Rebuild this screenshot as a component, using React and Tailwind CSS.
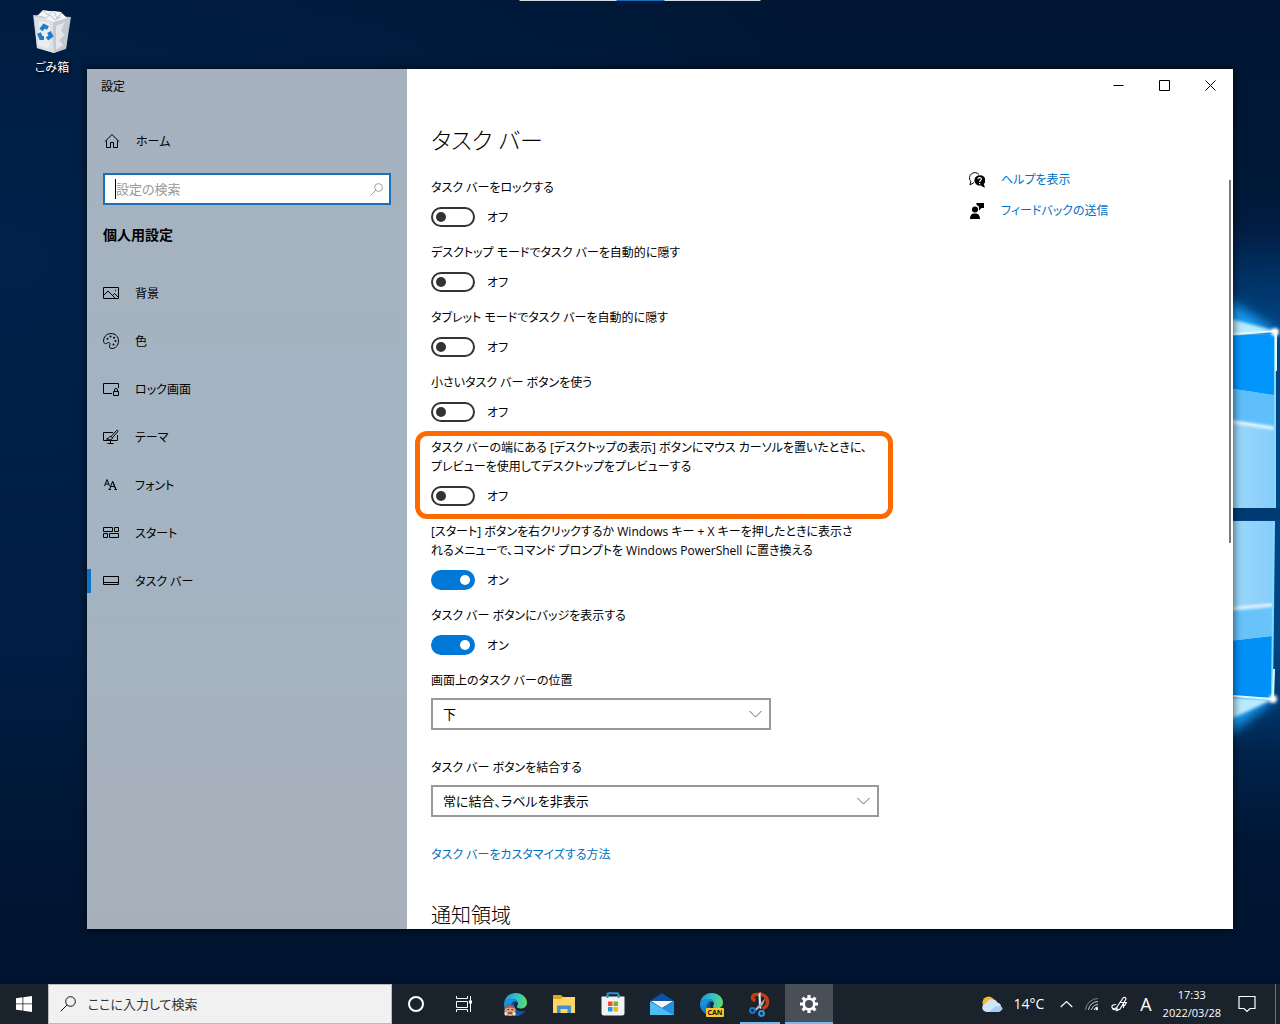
import React, { useState } from "react";

const NAV_ITEMS = [
  { id: "background", label: "背景" },
  { id: "colors", label: "色" },
  { id: "lock", label: "ロック画面" },
  { id: "themes", label: "テーマ" },
  { id: "fonts", label: "フォント" },
  { id: "start", label: "スタート" },
  { id: "taskbar", label: "タスク バー" },
];

const SETTINGS = [
  { id: "lockBar", lines: ["タスク バーをロックする"], on: false },
  {
    id: "hideDesktop",
    lines: ["デスクトップ モードでタスク バーを自動的に隠す"],
    on: false,
  },
  {
    id: "hideTablet",
    lines: ["タブレット モードでタスク バーを自動的に隠す"],
    on: false,
  },
  { id: "small", lines: ["小さいタスク バー ボタンを使う"], on: false },
  {
    id: "peek",
    lines: [
      "タスク バーの端にある [デスクトップの表示] ボタンにマウス カーソルを置いたときに、",
      "プレビューを使用してデスクトップをプレビューする",
    ],
    on: false,
    highlight: true,
  },
  {
    id: "powershell",
    lines: [
      "[スタート] ボタンを右クリックするか Windows キー + X キーを押したときに表示さ",
      "れるメニューで、コマンド プロンプトを Windows PowerShell に置き換える",
    ],
    on: true,
  },
  {
    id: "badge",
    lines: ["タスク バー ボタンにバッジを表示する"],
    on: true,
  },
];

// --- Icons ---
const NavIcon = ({ id }) => (
  <svg
    width="16"
    height="16"
    viewBox="0 0 16 16"
    fill="none"
    stroke="#000"
    strokeWidth="1"
    className="shrink-0"
    aria-hidden="true"
  >
    {id === "background" && (
      <>
        <path d="M.5 2.500h15v11H.5z" />
        <path d="M.5 10.500 5 6l7.500 7.500M9.500 10.500l2-2 4 4" />
        <path d="M12 5.500h1" />
      </>
    )}
    {id === "colors" && (
      <>
        <path d="M.6 8.500C.2 4 3.500.5 8 .5s7.500 3.300 7.500 7.500-3 7.500-6.500 7.500c-2.200 0-2.800-1.200-2.300-2.800.5-1.700.4-3-1-3.200-1.500-.2-1.700 1.300-3 1.200C1.500 10.600.7 9.700.6 8.500z" />
        <g fill="#000" stroke="none">
          <circle cx="4.500" cy="5.800" r="1" />
          <circle cx="7.500" cy="3.500" r="1" />
          <circle cx="11" cy="4.800" r="1" />
          <circle cx="12.500" cy="8" r="1" />
          <circle cx="10.500" cy="11.500" r="1" />
        </g>
      </>
    )}
    {id === "lock" && (
      <>
        <path d="M9 12.500H.5v-10h15V7" />
        <path d="M10.500 10.500h5v4h-5zM11.500 10.500V9a1.500 1.500 0 0 1 3 0v1.500" />
      </>
    )}
    {id === "themes" && (
      <>
        <path d="M10 3.500H.5v8h14V6M7.500 11.500v3M4.500 14.500h6" />
        <path d="M8 7.500 13.500 1.500c1-.8 2 .2 1.200 1.200L9.500 8.800zM8 7.500c-2 0-2 2-4.500 2.500 2 1.200 6 1 6-1.200" />
      </>
    )}
    {id === "fonts" && (
      <>
        <path d="M1.500 9 4 2.500 6.500 9M2.300 7h3.500" />
        <path d="M6.500 12.500 9.500 4.500l3.500 8M7.500 9.500h4.300M5.500 12.500h2.500M11.500 12.500h2.500" />
        <path d="M9.800 4.500 12.800 12.500" />
      </>
    )}
    {id === "start" && (
      <path d="M.5 2.500h9v4h-9zM11.500 2.500h4v4h-4zM.5 8.500h4v4h-4zM6.500 8.500h9v4h-9z" />
    )}
    {id === "taskbar" && <path d="M.5 3.500h15v8H.5zM.5 9.500h15" />}
  </svg>
);

const HomeIcon = () => (
  <svg width="16" height="16" viewBox="0 0 16 16" fill="none" stroke="#000" aria-hidden="true">
    <path d="M1 8.500 8 1.500l7 7M2.500 7.500v7h4v-5h3v5h4v-7" />
  </svg>
);

const Magnifier = ({ size, color }) => (
  <svg width={size} height={size} viewBox="0 0 16 16" fill="none" stroke={color} aria-hidden="true">
    <circle cx="10.500" cy="5.500" r="4.800" />
    <path d="M7 9 .7 15.300" />
  </svg>
);

const EdgeLogo = () => (
  <>
    <defs>
      <linearGradient id="edgeTop" x1="0" y1="0.400" x2="1" y2="0.500">
        <stop offset="0" stopColor="#2295d8" />
        <stop offset=".5" stopColor="#2fc1cf" />
        <stop offset="1" stopColor="#5fdc68" />
      </linearGradient>
      <linearGradient id="edgeLeft" x1="0" y1="0" x2="0.300" y2="1">
        <stop offset="0" stopColor="#1c9ce2" />
        <stop offset="1" stopColor="#1271c9" />
      </linearGradient>
    </defs>
    <path
      d="M1 12C1.500 5 6.500 1 12.500 1 19.500 1 24 6 24 10.500c0 4-3 6-6.200 6-2.600 0-4-1-4-2 0-.8 1.200-1.200 1.200-3C15 9 12.500 7 9 7c-4 0-7 2.500-8 5z"
      fill="url(#edgeTop)"
    />
    <path d="M1 12c.8-3 4-5 8-5 3.600 0 6 2.200 6 4.500-1-1.500-2.200-2-4-2-3 2-3.500 6 0 9 2 2 5 3 9 2.500C17 24.500 10 25 5.500 21 2 18 .8 15 1 12z" fill="url(#edgeLeft)" />
    <path d="M11 9.500C7.500 11 6.500 15.500 9 19c2.700 3.500 7.500 4.500 11.500 2 1.200-.8 2.200-2 2.200-2.600-3.200 1.600-7.200 1.200-9.700-1.400-2-2.200-1.900-4.500-.8-6.500z" fill="#14509c" />
  </>
);

const RecycleBin = () => (
  <svg width="40" height="46" viewBox="0 0 40 46" aria-hidden="true">
    <path d="M1 7 39 9 34 41 22 45 5 40z" fill="#aeb9c3" />
    <path d="M2 8 21 13 22 45 5 40z" fill="#dce1e6" />
    <path d="M21 13 38 9 34 40 22 45z" fill="#c3c9cf" />
    <path d="M5 8 11 2l6 1 5 0 7 1 6 6-13 4z" fill="#f4f5f6" />
    <path d="m11 2 5 5 5-4M22 4l3 6 5-5M7 8l7 2 4-3 5 5 6-3" stroke="#b8bfc5" fill="none" />
    <path d="m24 18 9-4-4 9 4 4-6 5 4 5-7 5z" fill="#eceef0" opacity=".8" />
    <path d="m7 12 10 3 3 15-4 11-10-4z" fill="#eff1f3" opacity=".7" />
    <g fill="none" stroke="#1e7cc8" strokeWidth="4">
      <path d="m9 22 3-4 4 2" />
      <path d="M7 25l2 5 3 0" />
      <path d="m17 24 2 4-4 3" />
    </g>
  </svg>
);

// Lit window panes at the right edge of the wallpaper
const WindowGlow = () => (
  <svg
    className="absolute right-0 top-[230px]"
    width="100"
    height="520"
    viewBox="1180 230 100 520"
    aria-hidden="true"
  >
    <defs>
      <linearGradient id="sky" x1="0" y1="0" x2="0" y2="1">
        <stop offset="0" stopColor="#00407e" stopOpacity="0" />
        <stop offset=".2" stopColor="#004583" />
        <stop offset=".8" stopColor="#004583" />
        <stop offset="1" stopColor="#00407e" stopOpacity="0" />
      </linearGradient>
      <linearGradient id="pane" x1="0" y1="0" x2="1" y2="0">
        <stop offset="0" stopColor="#a4ddfc" />
        <stop offset="1" stopColor="#86cdfa" />
      </linearGradient>
      <filter id="soft" x="-50%" y="-50%" width="200%" height="200%">
        <feGaussianBlur stdDeviation="6" />
      </filter>
      <filter id="soft1" x="-50%" y="-50%" width="200%" height="200%">
        <feGaussianBlur stdDeviation="1.500" />
      </filter>
    </defs>
    <path d="M1180 230h100v520h-100z" fill="url(#sky)" />
    <path d="M1220 295 1278 331 1220 345zM1220 690l56 9-56 42z" fill="#139cf5" filter="url(#soft)" />
    <path d="M1220 316 1276 331 1220 338zM1220 697l54 2-54 25z" fill="#b9ebff" filter="url(#soft1)" />
    <path d="M1220 336 1274 334v174h-54z" fill="url(#pane)" />
    <path d="M1220 336 1274 334v61l-54-8z" fill="#0095fc" />
    <path d="M1220 387 1274 395v32l-54-8z" fill="#5fbffb" />
    <path d="m1220 420 54 8" stroke="#f4fbff" strokeWidth="3" filter="url(#soft1)" />
    <path d="M1220 521h54l-2 177-52-3z" fill="url(#pane)" />
    <path d="m1220 610 53-5v31l-53 6z" fill="#a4ddfc" />
    <path d="m1220 642 53-6-1 62-52-3z" fill="#0090f8" />
    <path d="m1220 610 53-5v31l-53 6z" fill="#68c3fb" />
    <path d="m1220 610 53-5" stroke="#f4fbff" strokeWidth="3" filter="url(#soft1)" />
    <path d="M1220 508h60v12h-60z" fill="#003a72" />
    <path d="M1275 331v177M1274 521l-2 178" stroke="#7fdcff" strokeWidth="2" />
    <path d="m1220 335 56-4v40M1220 695l53 4 1-30" stroke="#e4faff" strokeWidth="2" fill="none" />
    <circle cx="1275" cy="332" r="4" fill="#fff" filter="url(#soft1)" />
    <circle cx="1273" cy="699" r="4" fill="#fff" filter="url(#soft1)" />
  </svg>
);

const ToggleSetting = ({ setting, checked, onChange }) => (
  <div className="relative flex flex-col gap-[10px]">
    <label htmlFor={setting.id} className="whitespace-nowrap">
      {setting.lines.map((line) => (
        <span key={line} className="block">
          {line}
        </span>
      ))}
    </label>
    <div className="flex h-5 items-center gap-3">
      <input
        id={setting.id}
        type="checkbox"
        role="switch"
        checked={checked}
        onChange={onChange}
        className="flex h-5 w-11 appearance-none items-center rounded-full border-2 border-[#333] px-[3px] before:size-[10px] before:rounded-full before:bg-[#333] checked:justify-end checked:border-[#0078d7] checked:bg-[#0078d7] checked:before:bg-white"
      />
      <span>{checked ? "オン" : "オフ"}</span>
    </div>
    {setting.highlight && (
      <div className="pointer-events-none absolute -left-4 -top-[7px] h-[88px] w-[478px] rounded-xl border-[5px] border-[#ff6a00]" />
    )}
  </div>
);

const SelectSetting = ({ id, label, options, className }) => (
  <div className="flex flex-col gap-2">
    <label htmlFor={id}>{label}</label>
    <div className={"relative h-8 " + className}>
      <select
        id={id}
        className="size-full appearance-none border-2 border-[#999] bg-white px-[10px] text-[13px] outline-none"
      >
        {options.map((o) => (
          <option key={o}>{o}</option>
        ))}
      </select>
      <svg
        className="pointer-events-none absolute right-[9px] top-[10px]"
        width="13"
        height="12"
        viewBox="0 0 13 12"
        fill="none"
        stroke="#666"
        aria-hidden="true"
      >
        <path d="m.5 3 6 6 6-6" />
      </svg>
    </div>
  </div>
);

const Sidebar = ({ active, onSelect }) => (
  <aside className="w-80 shrink-0 bg-[#a5b2be] bg-linear-to-b from-[#a6b1bd] via-[#a4b4c3] to-[#a7b0ba]">
    <div className="flex h-8 items-center pl-[14px] pt-[2px]">設定</div>
    <a href="#home" className="mt-5 flex h-10 items-center gap-4 pl-[17px]">
      <HomeIcon />
      ホーム
    </a>
    <div className="mx-4 mt-3 flex h-8 items-center border-2 border-[#1a70b8] bg-white pl-[10px] pr-[6px]">
      <span className="h-5 w-px bg-black" />
      <input
        type="text"
        aria-label="設定の検索"
        placeholder="設定の検索"
        className="min-w-0 flex-1 bg-transparent text-[13px] outline-none placeholder:text-[#999]"
      />
      <Magnifier size={13} color="#888" />
    </div>
    <h2 className="mt-5 pl-4 text-sm leading-5 font-bold">個人用設定</h2>
    <nav className="mt-6">
      {NAV_ITEMS.map((item) => (
        <a
          key={item.id}
          href={"#" + item.id}
          onClick={() => onSelect(item.id)}
          className="flex h-12 items-center"
        >
          <span
            className={
              item.id === active ? "mr-3 h-6 w-1 bg-[#0f72c4]" : "mr-3 h-6 w-1"
            }
          />
          <NavIcon id={item.id} />
          <span className="ml-4">{item.label}</span>
        </a>
      ))}
    </nav>
  </aside>
);

const TitleButtons = () => (
  <div className="flex h-8 shrink-0 justify-end">
    {[
      ["最小化", "M.5 5.500h10"],
      ["最大化", "M.5.5h10v10H.5z"],
      ["閉じる", "m.5.5 10 10M10.500.5l-10 10"],
    ].map(([name, d]) => (
      <button key={name} aria-label={name} className="flex w-[46px] items-center justify-center">
        <svg width="11" height="11" viewBox="0 0 11 11" fill="none" stroke="#000">
          <path d={d} />
        </svg>
      </button>
    ))}
  </div>
);

const HelpLinks = () => (
  <div className="mt-[63px] w-[260px] shrink-0 text-[#0070c4]">
    <a href="#help" className="flex h-[31px] items-center gap-4">
      <svg width="16" height="16" viewBox="0 0 16 16" aria-hidden="true">
        <path d="M5 10.500 1 13l.8-3.500A5 5 0 1 1 10 2.500" fill="none" stroke="#000" />
        <path d="M10.500 3.200a5.200 5.200 0 1 0 1.500 10.200c1 1 2.500 1.800 4 2l-1.200-3.300A5.200 5.200 0 0 0 10.500 3.200z" fill="#000" />
        <path d="M9 7.200c0-2.300 3.500-2 3.300 0-.1 1.300-1.700 1.300-1.700 2.800M10.600 11v1.200" fill="none" stroke="#fff" strokeWidth="1.200" />
      </svg>
      ヘルプを表示
    </a>
    <a href="#feedback" className="flex h-[31px] items-center gap-4">
      <svg width="16" height="16" viewBox="0 0 16 16" aria-hidden="true">
        <circle cx="6" cy="6.500" r="3" />
        <path d="M1 16c0-3.500 1.500-5.500 5-5.500s5 2 5 5.500zM7.500 0H15v5h-2.500L10 7.500V5C10 3 9 2.500 7.500 2z" />
      </svg>
      フィードバックの送信
    </a>
  </div>
);

const TaskButton = ({ name, className = "border-transparent", children }) => (
  <button
    aria-label={name}
    className={"flex h-full w-12 shrink-0 items-center justify-center border-b-2 pt-[2px] " + className}
  >
    {children}
  </button>
);

const Taskbar = () => (
  <footer className="relative flex h-10 shrink-0 items-center bg-[#1a222c] text-white">
    <TaskButton name="スタート">
      <svg width="16" height="16" viewBox="0 0 16 16" fill="#fff">
        <path d="M0 2.200 6.500 1.300v6.200H0zM7.300 1.200 16 0v7.500H7.300zM0 8.300h6.500v6.300L0 13.700zM7.300 8.300H16V16l-8.700-1.200z" />
      </svg>
    </TaskButton>
    <label className="flex h-full w-[344px] shrink-0 items-center gap-3 border border-[#bbb] bg-[#f1f1f1] pl-[11px] text-[13px] text-[#222]">
      <Magnifier size={16} color="#111" />
      <input
        type="text"
        aria-label="ここに入力して検索"
        placeholder="ここに入力して検索"
        className="min-w-0 flex-1 bg-transparent outline-none placeholder:text-[#333]"
      />
    </label>
    <TaskButton name="Cortana">
      <svg width="18" height="18" viewBox="0 0 18 18" fill="none" stroke="#fff" strokeWidth="2">
        <circle cx="9" cy="9" r="7" />
      </svg>
    </TaskButton>
    <TaskButton name="タスク ビュー">
      <svg width="17" height="16" viewBox="0 0 17 16" fill="none" stroke="#fff">
        <path d="M.5 0v2.500h11V0M.5 5.500h11v6H.5zM.5 16v-2.500h11V16M14.500 0v16" />
        <path d="M13 4.500h3v3h-3z" fill="#fff" stroke="none" />
      </svg>
    </TaskButton>
    <div className="ml-[3px] flex h-full gap-px">
      <TaskButton name="Microsoft Edge">
        <svg width="25" height="25" viewBox="0 0 25 25">
          <EdgeLogo />
          <circle cx="7" cy="18.500" r="5.500" fill="#dba183" />
          <path d="M2 16.500c0-3 3-4.500 5.500-3.500 3 0 4.500 2 4.500 3.500-3-1.500-7-1.500-10 0z" fill="#9a5f42" />
          <path d="M4.500 17.500h1.500M8.500 17.500h1.500M5 21h4" stroke="#3a2018" strokeWidth="1.200" />
          <path d="M1 20.500h3v3H2zM10 20.500h3l-1 3h-2z" fill="#ece6e2" />
        </svg>
      </TaskButton>
      <TaskButton name="エクスプローラー">
        <svg width="22" height="19" viewBox="0 0 22 19">
          <path d="M0 0h8l2 2h12v15H0z" fill="#e3a31a" />
          <path d="M0 4h8l2-2h12v16H0z" fill="#fcd766" />
          <path d="M4 18v-7.500h14V18h-3.500v-4h-7v4z" fill="#3f91cf" />
        </svg>
      </TaskButton>
      <TaskButton name="Microsoft Store">
        <svg width="24" height="24" viewBox="0 0 24 24">
          <path d="M6.500 6V2.500c0-.8.500-1.200 1.200-1.200h8.600c.7 0 1.200.4 1.200 1.200V6" fill="none" stroke="#2c93d1" strokeWidth="2" />
          <path d="M.5 4.500h23V21a2.500 2.500 0 0 1-2.500 2.500H3A2.500 2.500 0 0 1 .5 21z" fill="#f2f2f2" />
          <path d="M6.500 6V3M17.500 6V3" stroke="#2c93d1" strokeWidth="2" />
          <path d="M7 9.500h4.500V14H7z" fill="#e8502b" />
          <path d="M12.500 9.500H17V14h-4.500z" fill="#76b31f" />
          <path d="M7 15h4.500v4.500H7z" fill="#1c9ce0" />
          <path d="M12.500 15H17v4.500h-4.500z" fill="#f8b513" />
        </svg>
      </TaskButton>
      <TaskButton name="メール">
        <svg width="24" height="22" viewBox="0 0 24 22">
          <path d="M0 8 12 0l12 8-3 5H3z" fill="#0c52a4" />
          <path d="M1 8h22L12 15z" fill="#f3f7fb" />
          <path d="M0 8.500 12 15.500 24 8v14H0z" fill="#29a2ea" />
          <path d="m0 8.500 24 13.500H0z" fill="#4fbcf2" />
          <path d="m12 15.500 12-7.500v14z" fill="#2191e0" />
        </svg>
      </TaskButton>
      <TaskButton name="Microsoft Edge Canary">
        <svg width="25" height="25" viewBox="0 0 25 25">
          <EdgeLogo />
          <rect x="7" y="16" width="18" height="9" rx="1" fill="#fcc72c" />
          <text x="16" y="23" textAnchor="middle" fontSize="7" fontWeight="700" fill="#111" fontFamily="Open Sans">
            CAN
          </text>
        </svg>
      </TaskButton>
      <div className="flex h-full w-12 justify-center">
        <button
          aria-label="Snipping Tool"
          className="flex h-full w-10 items-center justify-center border-b-2 border-[#76b9ed] pt-[2px]"
        >
          <svg width="24" height="25" viewBox="0 0 24 25" fill="none">
            <path d="M7.500 8.500C3 7 4 2.500 8.500 2.500c7-.8 11 2 11 7.500 0 3.500-2 5.500-5 6.500" stroke="#c63b14" strokeWidth="3.500" />
            <path d="M10.500 2 12.500 0l.8 17-2.300-1z" fill="#e5e7e9" />
            <path d="m17.500 6-2.500 6.500L8 19l-1.500-1.500z" fill="#aab0b6" />
            <circle cx="4.500" cy="18.500" r="2.400" stroke="#1c78c8" strokeWidth="2" />
            <circle cx="13.500" cy="21.500" r="2.400" stroke="#2f9be5" strokeWidth="2" />
          </svg>
        </button>
      </div>
      <TaskButton name="設定" className="border-[#76b9ed] bg-[#494f57]">
        <svg width="20" height="20" viewBox="0 0 20 20" fill="none" stroke="#fff">
          <circle cx="10" cy="10" r="5.300" strokeWidth="2.600" />
          <path
            d="M10 1v3M10 16v3M1 10h3M16 10h3M3.600 3.600l2.200 2.200M14.200 14.200l2.200 2.200M3.600 16.400l2.200-2.200M14.200 5.800l2.200-2.200"
            strokeWidth="3.200"
          />
        </svg>
      </TaskButton>
    </div>

    {/* System tray */}
    <div className="ml-auto flex h-full items-center">
      <button className="flex items-center gap-[10px] text-sm">
        <svg width="21" height="17" viewBox="0 0 21 17" aria-hidden="true">
          <circle cx="6.500" cy="6.500" r="6" fill="#f7b731" />
          <path d="M5 16a4.500 4.500 0 0 1-.5-9A6 6 0 0 1 15.500 6.500 5 5 0 0 1 16 16z" fill="#cfe4f7" />
          <path d="M5 16c4 0 5-5 11-6 3-.3 5 1.500 4.500 3S18 16 16 16z" fill="#a9cdf0" />
        </svg>
        14°C
      </button>
      <button aria-label="隠れているインジケーター" className="ml-4">
        <svg width="13" height="13" viewBox="0 0 13 13" fill="none" stroke="#fff" strokeWidth="1.200">
          <path d="m.7 9 5.800-5.500L12.300 9" />
        </svg>
      </button>
      <button aria-label="ネットワーク" className="ml-3">
        <svg width="14" height="14" viewBox="0 0 14 14" fill="none" stroke="#c8ccd0">
          <path d="M.5 13A12.500 12.500 0 0 1 13 1.500" stroke="#7c838b" />
          <path d="M3.500 13A9.500 9.500 0 0 1 13 4.500M6.500 13A6.500 6.500 0 0 1 13 7.500" />
          <path d="M9.200 13A3.800 3.800 0 0 1 13 10" stroke="#fff" />
          <circle cx="11.800" cy="12" r="1.200" fill="#fff" stroke="none" />
        </svg>
      </button>
      <button aria-label="Windows Ink" className="ml-3">
        <svg width="17" height="17" viewBox="0 0 17 17" fill="none" stroke="#fff" strokeWidth="1.200">
          <path d="m6 11 6-9c1-1.500 3.500-.3 2.700 1.500L9 13l-3 1.500zM9.500 6.500h5.800l-2 3.500M5 8.500c-3 0-4.500 1.200-4 3 .6 2 5 3.500 5 1.500 0-1-2-1.500-4.500.5M12.500 7v5" />
        </svg>
      </button>
      <button className="ml-3 text-lg">A</button>
      <time className="ml-[11px] text-center text-[11px] leading-[18px]">
        17:33
        <br />
        2022/03/28
      </time>
      <button aria-label="通知" className="ml-[17px]">
        <svg width="18" height="18" viewBox="0 0 18 18" fill="none" stroke="#fff" strokeWidth="1.200">
          <path d="M1 1.500h16v12h-5L9 16.500l-3-3H1z" />
        </svg>
      </button>
      <span className="ml-[19px] mr-1 h-full w-px bg-[#6a7077]" />
    </div>
  </footer>
);

export default function App() {
  const [active, setActive] = useState("taskbar");
  const [values, setValues] = useState(
    Object.fromEntries(SETTINGS.map((s) => [s.id, s.on]))
  );

  const toggle = (id) => setValues({ ...values, [id]: !values[id] });

  return (
    <div
      lang="ja"
      className="relative flex h-screen flex-col overflow-hidden bg-[#001736] bg-[radial-gradient(ellipse_at_100%_50%,#00407c_0%,transparent_45%),radial-gradient(ellipse_at_0%_25%,#00224b_0%,transparent_50%),linear-gradient(to_bottom,#001634,#001d42_60%,#00122c)] font-['Open_Sans','Noto_Sans_CJK_JP',sans-serif] text-xs leading-[19px] text-black [font-feature-settings:'palt']"
    >
      <WindowGlow />

      {/* Handle of the remote session bar */}
      <div className="absolute left-1/2 top-0 flex h-px w-[241px] -translate-x-1/2 bg-[#d5dbe2]">
        <span className="mx-auto w-12 bg-[#0f6cbf]" />
      </div>

      <button className="absolute left-[14px] top-[8px] flex w-[76px] flex-col items-center gap-[2px] leading-6 text-white [text-shadow:1px_1px_2px_#000]">
        <RecycleBin />
        ごみ箱
      </button>

      <main className="relative flex min-h-0 flex-1 pb-[55px] pl-[87px] pr-[47px] pt-[69px]">
        <div className="flex min-w-0 flex-1 bg-white shadow-[0_0_8px_1px_rgba(0,0,0,0.6)]">
          <Sidebar active={active} onSelect={setActive} />

          <div className="flex min-w-0 flex-1 flex-col">
            <TitleButtons />
            <div className="flex min-h-0 flex-1">
              <div className="flex min-h-0 flex-1 overflow-y-auto [scrollbar-width:none]">
                <section className="min-w-0 flex-1 pl-6 pt-[21px]">
                  <h1 className="text-[23px] leading-9 font-light">タスク バー</h1>
                  <div className="mt-5 flex flex-col gap-4">
                    {SETTINGS.map((s) => (
                      <ToggleSetting
                        key={s.id}
                        setting={s}
                        checked={values[s.id]}
                        onChange={() => toggle(s.id)}
                      />
                    ))}
                  </div>
                  <div className="mt-4 flex flex-col gap-7">
                    <SelectSetting
                      id="position"
                      label="画面上のタスク バーの位置"
                      options={["下", "左", "上", "右"]}
                      className="w-[340px]"
                    />
                    <SelectSetting
                      id="combine"
                      label="タスク バー ボタンを結合する"
                      options={[
                        "常に結合、ラベルを非表示",
                        "タスク バーに入りきらない場合",
                        "結合しない",
                      ]}
                      className="w-[448px]"
                    />
                    <a href="#customize" className="self-start text-[#0070c4]">
                      タスク バーをカスタマイズする方法
                    </a>
                  </div>
                  <h2 className="mt-10 text-xl leading-6 font-light">通知領域</h2>
                </section>
              </div>
              <HelpLinks />
              <div className="mt-[79px] mr-[2px] h-[363px] w-[2px] shrink-0 bg-[#7a7a7a]" />
            </div>
          </div>
        </div>
      </main>

      <Taskbar />
    </div>
  );
}
